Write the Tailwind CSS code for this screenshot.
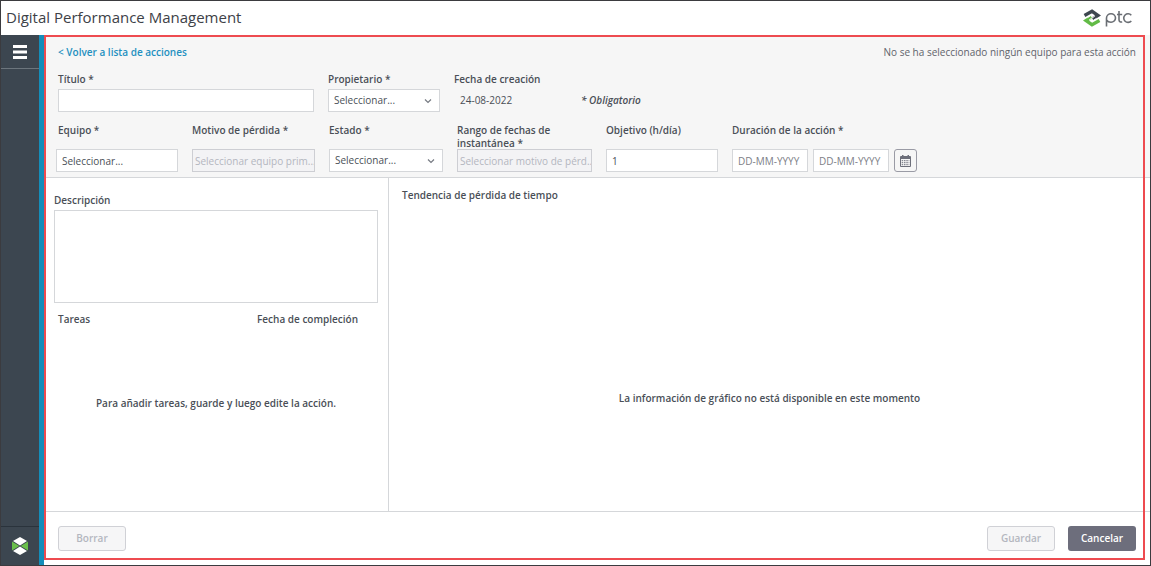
<!DOCTYPE html>
<html lang="es">
<head>
<meta charset="utf-8">
<meta name="viewport" content="width=device-width, initial-scale=1">
<title>Digital Performance Management</title>
<script src="https://cdn.jsdelivr.net/npm/@tailwindcss/browser@4"></script>
</head>
<body class="flex min-h-screen flex-col border border-[#3b3b3f] bg-white font-['Open_Sans','Noto_Sans',sans-serif] text-[10px] leading-[13px] text-[#4a4f57]">
  <header class="flex h-[34px] items-center justify-between pl-[5px] pr-[18px]">
    <h1 class="pb-[2px] text-[15px] leading-5 text-[#3d4147]">Digital Performance Management</h1>
    <div class="flex items-center gap-1 text-[#6a6e74]" role="img" aria-label="ptc">
      <svg class="h-[18px] w-[18px]" viewBox="0 0 18 18" fill="none" stroke-width="3.400">
        <path stroke="#3e4750" d="M1.500 6.400 9 2.300 15 6.400 9.500 9.900"/>
        <path stroke="#62bb46" d="M16.500 11.600 9 15.700 3 11.600 8.500 8.100"/>
        <path stroke="#fff" stroke-width=".9" d="M4.500 8.700 9 5.800 11.500 7.400 6.500 10.600 9 12.200 13.500 9.300"/>
      </svg>
      <svg class="h-[18px] w-[27px]" viewBox="0 0 27 18" fill="none" stroke="currentColor" stroke-width="1.600">
        <path d="M1.500 17.500V9a4.500 4.300 0 1 1 4.500 4.300Q3 13.300 1.500 11M14 2V10.500Q14 13.500 17.200 13M12 5.500H17.200M26.300 6.300A4.300 4.300 0 1 0 26.300 11.900"/>
      </svg>
    </div>
  </header>

  <div class="flex flex-1">
    <nav class="flex w-[43px] shrink-0 flex-col justify-between border-r-[5px] border-[#148dba] bg-[#3c4650]" aria-label="Principal">
      <button class="flex h-[34px] items-center justify-center border-b border-[#6c757d]" aria-label="Menú">
        <svg class="h-[14px] w-[14px]" viewBox="0 0 14 14" fill="#fff"><path d="M0 0H14V3H0ZM0 5.500H14V8.500H0ZM0 11H14V14H0Z"/></svg>
      </button>
      <a href="#" class="flex h-[39px] items-center justify-center border-t border-[#2a333c]" aria-label="ThingWorx">
        <svg class="h-[18px] w-[18px]" viewBox="0 0 18 18">
          <path fill="#fff" d="M9 0 16 4 9 8.500 2 4ZM9 9.500 16 14 9 18 2 14Z"/>
          <path fill="#6abf4b" d="M1 4.500 8.300 9 1 13.500ZM17 4.500 9.700 9 17 13.500Z"/>
        </svg>
      </a>
    </nav>

    <main class="relative flex min-w-0 flex-1 flex-col">
      <form id="accion" class="border-b border-[#d5d7da] bg-[#f6f6f6] pb-[5px] pl-3 pr-[14px] pt-[11px]">
        <div class="flex items-center justify-between pl-[2px]">
          <a href="#" class="font-semibold text-[#2490c0]">&lt; Volver a lista de acciones</a>
          <p class="text-[#5f636b]">No se ha seleccionado ningún equipo para esta acción</p>
        </div>

        <div class="mt-[14px] flex gap-[14px] pl-[2px]">
          <div class="flex w-64 flex-col gap-[3px]">
            <label for="titulo" class="font-semibold">Título *</label>
            <input id="titulo" type="text" class="h-[23px] w-full border border-[#d5d7da] bg-white px-[5px]">
          </div>
          <div class="flex w-28 flex-col gap-[3px]">
            <label for="propietario" class="font-semibold">Propietario *</label>
            <div class="relative">
              <select id="propietario" class="block h-[23px] w-full appearance-none border border-[#d5d7da] bg-white px-[5px]"><option>Seleccionar...</option></select>
              <svg class="pointer-events-none absolute right-2 top-2 h-2 w-2" viewBox="0 0 8 8" fill="none" stroke="#767a82" stroke-width="1.200"><path d="M1 2.500 4 5.500 7 2.500"/></svg>
            </div>
          </div>
          <div class="flex w-[113px] flex-col gap-[3px]">
            <span class="font-semibold">Fecha de creación</span>
            <span class="flex h-[23px] items-center px-[6px]">24-08-2022</span>
          </div>
          <p class="flex h-[23px] items-center self-end font-semibold italic">* Obligatorio</p>
        </div>

        <div class="mt-3 flex gap-[14px]">
          <div class="flex w-[122px] flex-col justify-between">
            <label for="equipo" class="pl-[2px] font-semibold">Equipo *</label>
            <input id="equipo" type="text" placeholder="Seleccionar..." class="h-[23px] w-full border border-[#d5d7da] bg-white px-[5px] placeholder:text-[#4a4f57]">
          </div>
          <div class="flex w-[123px] flex-col justify-between">
            <label for="motivo" class="font-semibold">Motivo de pérdida *</label>
            <input id="motivo" type="text" disabled placeholder="Seleccionar equipo prim..." class="h-[23px] w-full border border-[#cdced3] bg-[#f3f3f5] pl-[2px] placeholder:text-[#b4b6bf]">
          </div>
          <div class="flex w-[114px] flex-col justify-between">
            <label for="estado" class="font-semibold">Estado *</label>
            <div class="relative">
              <select id="estado" class="block h-[23px] w-full appearance-none border border-[#d5d7da] bg-white px-[5px]"><option>Seleccionar...</option></select>
              <svg class="pointer-events-none absolute right-2 top-2 h-2 w-2" viewBox="0 0 8 8" fill="none" stroke="#767a82" stroke-width="1.200"><path d="M1 2.500 4 5.500 7 2.500"/></svg>
            </div>
          </div>
          <div class="flex w-[135px] flex-col justify-between">
            <label for="rango" class="w-28 font-semibold">Rango de fechas de instantánea *</label>
            <input id="rango" type="text" disabled placeholder="Seleccionar motivo de pérd..." class="-mt-px h-[23px] w-full border border-[#cdced3] bg-[#f3f3f5] pl-[2px] placeholder:text-[#b4b6bf]">
          </div>
          <div class="flex w-28 flex-col justify-between">
            <label for="objetivo" class="font-semibold">Objetivo (h/día)</label>
            <input id="objetivo" type="text" value="1" class="h-[23px] w-full border border-[#d5d7da] bg-white px-[5px]">
          </div>
          <div class="flex flex-col justify-between">
            <label for="inicio" class="font-semibold">Duración de la acción *</label>
            <div class="flex gap-[5px]">
              <input id="inicio" type="text" placeholder="DD-MM-YYYY" class="h-[23px] w-[76px] border border-[#d5d7da] bg-white px-[5px] placeholder:text-[#7d8087]">
              <input type="text" aria-label="Fin de la acción" placeholder="DD-MM-YYYY" class="h-[23px] w-[76px] border border-[#d5d7da] bg-white px-[5px] placeholder:text-[#7d8087]">
              <button type="button" aria-label="Abrir calendario" class="flex h-[23px] w-[23px] items-center justify-center rounded-[3px] border border-[#9a9ba5] bg-[#f6f6f6]">
                <svg class="h-3 w-[11px]" viewBox="0 0 11 12">
                  <path fill="#6d6f7a" fill-rule="evenodd" d="M2 0H3.500V1H7.500V0H9V1H10Q11 1 11 2V11Q11 12 10 12H1Q0 12 0 11V2Q0 1 1 1H2ZM1 4V11H10V4Z"/>
                  <path stroke="#6d6f7a" stroke-dasharray="1.500 .8" d="M1.700 5.700H9.300M1.700 7.700H9.300M1.700 9.700H9.300"/>
                </svg>
              </button>
            </div>
          </div>
        </div>
      </form>

      <div class="flex flex-1 font-semibold">
        <section class="flex w-[345px] shrink-0 flex-col border-r border-[#d5d7da] pl-[10px] pr-[10px] pt-4">
          <label for="descripcion">Descripción</label>
          <textarea id="descripcion" form="accion" class="mt-[3px] h-[93px] w-full resize-none border border-[#d5d7da] bg-white p-[5px] font-normal"></textarea>
          <div class="mt-[10px] flex justify-between pl-1 pr-5">
            <h2 class="font-semibold">Tareas</h2>
            <span>Fecha de compleción</span>
          </div>
          <p class="mt-[71px] text-center">Para añadir tareas, guarde y luego edite la acción.</p>
        </section>
        <section class="flex flex-1 flex-col px-[13px] pt-[11px]">
          <h2 class="font-semibold">Tendencia de pérdida de tiempo</h2>
          <p class="flex flex-1 items-center justify-center pt-[91px] pb-2">La información de gráfico no está disponible en este momento</p>
        </section>
      </div>

      <footer class="flex h-[54px] items-center border-t border-[#d5d7da] pl-[14px] pr-[14px] font-semibold">
        <button type="submit" form="accion" disabled class="h-[25px] w-[68px] rounded-[3px] border border-[#d0d1d6] bg-[#f6f6f7] text-[#b4b6bf]">Borrar</button>
        <button type="submit" form="accion" disabled class="ml-auto h-[25px] w-[68px] rounded-[3px] border border-[#d0d1d6] bg-[#f6f6f7] text-[#b4b6bf]">Guardar</button>
        <button type="button" class="ml-[13px] h-[25px] w-[68px] rounded-[3px] bg-[#6d6e7c] text-white">Cancelar</button>
      </footer>

      <div class="pointer-events-none absolute bottom-[5px] left-0 right-[5px] top-0 border-2 border-[#ee4b50]"></div>
    </main>
  </div>
</body>
</html>
